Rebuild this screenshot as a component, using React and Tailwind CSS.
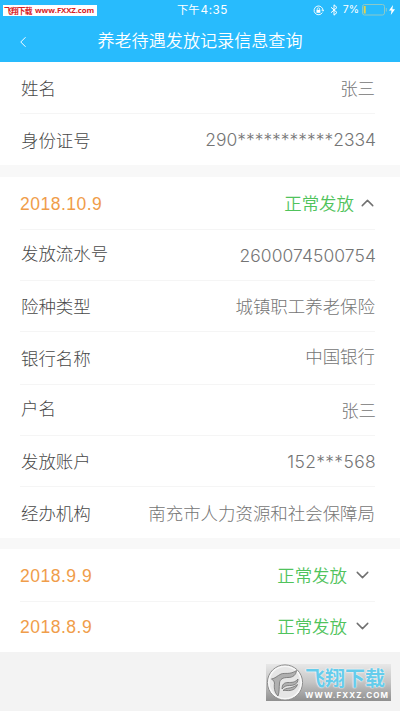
import { ChevronDown, ChevronUp, ChevronLeft } from 'lucide-react';

const cjk = "font-['Noto_Sans_CJK_SC',sans-serif]";
const digits = "font-['Inter','Noto_Sans_CJK_SC',sans-serif]";

const person = [
  { label: '姓名', value: '张三', h: 'h-[52px]', l: 'pt-px', r: 'pt-px' },
  { label: '身份证号', value: '290***********2334', num: 'tracking-[0px]', h: 'h-[51px]', l: '', r: 'pt-px' },
];

const details = [
  { label: '发放流水号', value: '2600074500754', num: 'tracking-[0.1px]', h: 'h-[51px]', l: 'pb-[4px]', r: 'pt-px' },
  { label: '险种类型', value: '城镇职工养老保险', h: 'h-[51px]', l: '', r: 'pb-px' },
  { label: '银行名称', value: '中国银行', h: 'h-[53px]', l: 'pb-px', r: 'pb-[5px]' },
  { label: '户名', value: '张三', h: 'h-[51px]', l: 'pb-[5px]', r: 'pb-px -mr-px' },
  { label: '发放账户', value: '152***568', num: 'tracking-[0.35px]', h: 'h-[51px]', l: 'pb-px', r: 'pt-px' },
  { label: '经办机构', value: '南充市人力资源和社会保障局', h: 'h-[51px]', l: '', r: '' },
];

function Row({ item, last }) {
  return (
    <div className={`ml-5 mr-[25px] flex items-center justify-between ${item.h} ${last ? '' : 'border-b border-[#f5f5f5]'}`}>
      <span className={`text-[#484848] pl-px ${item.l}`}>{item.label}</span>
      <span className={`text-[#747474] ${item.r} ${item.num ? `${digits} ${item.num} -mr-px` : ''}`}>{item.value}</span>
    </div>
  );
}

function Record({ date, open, h, last }) {
  const Icon = open ? ChevronUp : ChevronDown;
  return (
    <div className={`ml-5 flex items-center justify-between mr-[25px] ${h} ${last ? '' : 'border-b border-[#f5f5f5]'}`}>
      <span className="text-[#f09d4a] font-normal pt-px text-[17.5px] tracking-[0.5px] font-['Liberation_Sans',sans-serif]">{date}</span>
      <span className={`flex items-center text-[#50c35c] font-[350] pb-px ${open ? '' : 'pr-[5px]'}`}>
        正常发放
        <Icon className={`w-[21px] h-[22px] -mr-[3px] text-[#707070] ${open ? 'ml-[3px]' : 'ml-[5px]'}`} strokeWidth={1.7} />
      </span>
    </div>
  );
}

function Battery() {
  return (
    <svg viewBox="0 0 25 12" className="w-[25px] h-3" fill="none">
      <rect x="0.5" y="0.5" width="22" height="10.5" rx="2" stroke="#8bc9c8" />
      <rect x="1.7" y="2" width="2" height="7.5" fill="#e5d34b" />
      <path d="M24.3 4v3.5" stroke="#8bc9c8" />
    </svg>
  );
}

function StatusBar() {
  return (
    <div className="grid grid-cols-[177px_1fr_auto] items-center h-5 pr-[5px] font-normal text-white">
      <div className="ml-[3px] mt-px w-[94px] h-[11px] bg-white text-[#d82025] font-bold text-[7.7px] leading-[11px] whitespace-nowrap flex items-center justify-between px-[1px] overflow-hidden">
        <span className="tracking-[-0.8px]">飞翔下载</span>
        <span className="font-['Open_Sans',sans-serif] text-[7.8px] tracking-[-0.1px] pr-[2px]">www.FXXZ.com</span>
      </div>
      <span className="text-[11.3px] leading-none whitespace-nowrap">
        下午<span className="font-['Inter',sans-serif] text-[11.7px] tracking-[0.5px] pl-px">4:35</span>
      </span>
      <div className="flex items-center h-5">
        <svg viewBox="0 0 12 12" className="w-[11px] h-[11px]" fill="none" stroke="white" strokeWidth="1">
          <path d="M10.2 8.2A4.8 4.8 0 1 1 10.8 5.6M9.3 5.2l1.5 1.6L12 5" />
          <path d="M4.6 5.6V4.4a1.3 1.3 0 0 1 2.6 0v1.2" strokeWidth="0.8" />
          <rect x="3.8" y="5.3" width="4.2" height="3.2" fill="white" stroke="none" />
        </svg>
        <svg viewBox="0 0 8 12" className="w-2 h-3 ml-[6px]" fill="none" stroke="white" strokeWidth="1">
          <path d="M1 3.3l6 5.2-3 2.7V0.8l3 2.7-6 5.2" />
        </svg>
        <span className="font-['Inter',sans-serif] text-[10.5px] ml-[5px] mr-[3px]">7%</span>
        <Battery />
        <svg viewBox="0 0 6 10" className="w-[6px] h-[10px] ml-[2px]" fill="white">
          <path d="M4 0L0 5.6h2.5L1.8 10 6 4.2H3.4z" />
        </svg>
      </div>
    </div>
  );
}

function Watermark() {
  return (
    <div className="absolute left-[266px] top-[664px] w-[125px] h-[37px] bg-linear-to-b from-[#e8e8e8] via-[#c4c4c4] to-[#8f8f8f] flex">
      <svg viewBox="0 0 38 37" className="w-[38px] h-[37px] shrink-0" fill="none">
        <circle cx="19" cy="18.5" r="17.6" fill="#f7f7f7" stroke="#8e8e8e" strokeWidth="1" />
        <circle cx="19" cy="18.5" r="15.4" fill="#e6e6e6" />
        <g fill="#b0b0b0" stroke="#6f6f6f" strokeWidth=".8" strokeLinejoin="round">
          <path d="M12 32C8 28 8 23 8.500 19C8 17 7 16 5.500 15C9 14.500 11 12 15 10C19 8.500 24 11 30.500 6.500C30 11 27 13.500 22 13.500C17 13.500 14 15 13.500 19C13 24 13.500 28 12 32z" />
          <path d="M16 25C16 20.500 18 18.500 22 18.500C26 18.500 29 18.500 32 15C32 20 28 21.500 23.500 21.500C20 21.500 18 22.500 16 25z" />
          <path d="M17 26.500C20 23 25 25.500 31.500 20.500C30 25.500 25 27 21 26.500C19 26.500 18 26.500 17 26.500z" />
        </g>
      </svg>
      <div className="flex flex-col whitespace-nowrap pt-[3px] pl-px">
        <span className="text-[20px] leading-[22px] h-[23px] font-bold text-[#65cceb] [text-shadow:0_0_1px_white,0_0_2px_white]">飞翔下载</span>
        <span className="font-['Inter',sans-serif] font-bold text-[8px] leading-[10px] tracking-[1.1px] text-white">WWW.FXXZ.COM</span>
      </div>
    </div>
  );
}

export default function App() {
  return (
    <div className={`relative w-[400px] h-[711px] overflow-hidden bg-[#f3f3f3] text-[17.45px] leading-[24px] font-light ${cjk}`}>
      <header className="h-[62px] bg-[#28bbfd] text-white">
        <StatusBar />
        <div className="relative flex items-center justify-center h-[42px] font-[350]">
          <ChevronLeft className="absolute left-[14px] top-[13px] w-[18px] h-[18px]" strokeWidth={1.3} />
          <h1 className="text-[17.1px] pb-[2px]">养老待遇发放记录信息查询</h1>
        </div>
      </header>

      <section className="bg-white border-b-12 border-[#f8f8f8]">
        {person.map((item, i) => (
          <Row key={item.label} item={item} last={i === person.length - 1} />
        ))}
      </section>

      <section className="bg-white border-b-11 border-[#f8f8f8]">
        <Record date="2018.10.9" open h="h-[53px]" />
        {details.map((item, i) => (
          <Row key={item.label} item={item} last={i === details.length - 1} />
        ))}
      </section>

      <section className="bg-white pb-px">
        <Record date="2018.9.9" h="h-[53px]" />
        <Record date="2018.8.9" h="h-[49px]" last />
      </section>

      <Watermark />
    </div>
  );
}
